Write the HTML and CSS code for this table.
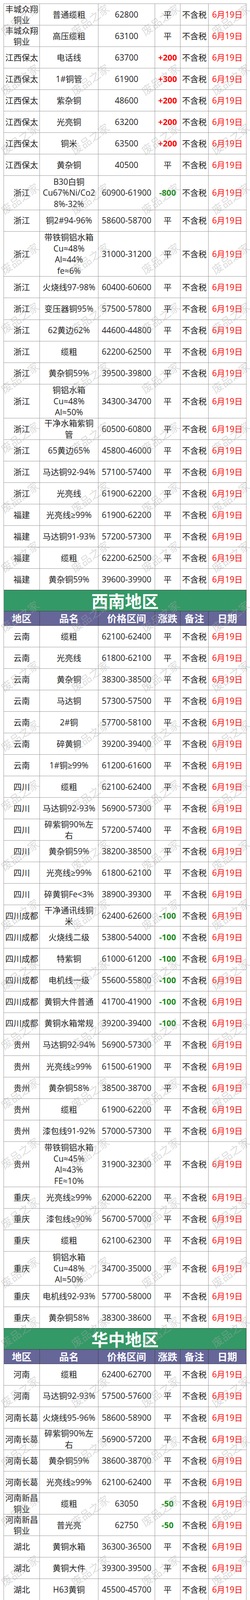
FILE: index.html
```html
<!DOCTYPE html>
<html lang="zh-CN">
<head>
<meta charset="utf-8">
<title>铜价行情</title>
<link rel="stylesheet" href="styles.css">
</head>
<body>
<div class="page">
<div class="tbl">
<div class="r"><div>丰城众翔<br>铜业</div><div>普通缆粗</div><div>62800</div><div>平</div><div>不含税</div><div class="dt">6月19日</div></div>
<div class="r"><div>丰城众翔<br>铜业</div><div>高压缆粗</div><div>63100</div><div>平</div><div>不含税</div><div class="dt">6月19日</div></div>
<div class="r"><div>江西保太</div><div>电话线</div><div>63700</div><div class="up">+200</div><div>不含税</div><div class="dt">6月19日</div></div>
<div class="r"><div>江西保太</div><div>1#铜管</div><div>61900</div><div class="up">+300</div><div>不含税</div><div class="dt">6月19日</div></div>
<div class="r"><div>江西保太</div><div>紫杂铜</div><div>48600</div><div class="up">+200</div><div>不含税</div><div class="dt">6月19日</div></div>
<div class="r"><div>江西保太</div><div>光亮铜</div><div>63200</div><div class="up">+200</div><div>不含税</div><div class="dt">6月19日</div></div>
<div class="r"><div>江西保太</div><div>铜米</div><div>63500</div><div class="up">+200</div><div>不含税</div><div class="dt">6月19日</div></div>
<div class="r"><div>江西保太</div><div>黄杂铜</div><div>40500</div><div>平</div><div>不含税</div><div class="dt">6月19日</div></div>
<div class="r l3"><div>浙江</div><div>B30白铜<br>Cu67%Ni/Co2<br>8%-32%</div><div>60900-61900</div><div class="dn">-800</div><div>不含税</div><div class="dt">6月19日</div></div>
<div class="r"><div>浙江</div><div>铜2#94-96%</div><div>58600-58700</div><div>平</div><div>不含税</div><div class="dt">6月19日</div></div>
<div class="r l4"><div>浙江</div><div>带铁铜铝水箱<br>Cu≈48%<br>Al≈44%<br>fe≈6%</div><div>31000-31200</div><div>平</div><div>不含税</div><div class="dt">6月19日</div></div>
<div class="r"><div>浙江</div><div>火烧线97-98%</div><div>60400-60600</div><div>平</div><div>不含税</div><div class="dt">6月19日</div></div>
<div class="r"><div>浙江</div><div>变压器铜95%</div><div>57500-57800</div><div>平</div><div>不含税</div><div class="dt">6月19日</div></div>
<div class="r"><div>浙江</div><div>62黄边62%</div><div>44600-44800</div><div>平</div><div>不含税</div><div class="dt">6月19日</div></div>
<div class="r"><div>浙江</div><div>缆粗</div><div>62200-62500</div><div>平</div><div>不含税</div><div class="dt">6月19日</div></div>
<div class="r"><div>浙江</div><div>黄杂铜59%</div><div>39500-39800</div><div>平</div><div>不含税</div><div class="dt">6月19日</div></div>
<div class="r l3"><div>浙江</div><div>铜铝水箱<br>Cu≈48%<br>Al≈50%</div><div>34300-34700</div><div>平</div><div>不含税</div><div class="dt">6月19日</div></div>
<div class="r"><div>浙江</div><div>干净水箱紫铜<br>管</div><div>60500-60800</div><div>平</div><div>不含税</div><div class="dt">6月19日</div></div>
<div class="r"><div>浙江</div><div>65黄边65%</div><div>45800-46000</div><div>平</div><div>不含税</div><div class="dt">6月19日</div></div>
<div class="r"><div>浙江</div><div>马达铜92-94%</div><div>57100-57400</div><div>平</div><div>不含税</div><div class="dt">6月19日</div></div>
<div class="r"><div>浙江</div><div>光亮线</div><div>61900-62200</div><div>平</div><div>不含税</div><div class="dt">6月19日</div></div>
<div class="r"><div>福建</div><div>光亮线≥99%</div><div>61900-62200</div><div>平</div><div>不含税</div><div class="dt">6月19日</div></div>
<div class="r"><div>福建</div><div>马达铜91-93%</div><div>57200-57300</div><div>平</div><div>不含税</div><div class="dt">6月19日</div></div>
<div class="r"><div>福建</div><div>缆粗</div><div>62200-62500</div><div>平</div><div>不含税</div><div class="dt">6月19日</div></div>
<div class="r"><div>福建</div><div>黄杂铜59%</div><div>39600-39900</div><div>平</div><div>不含税</div><div class="dt">6月19日</div></div>

<div class="sec">西南地区</div>
<div class="r hd"><div>地区</div><div>品名</div><div>价格区间</div><div>涨跌</div><div>备注</div><div>日期</div></div>
<div class="r"><div>云南</div><div>缆粗</div><div>62100-62400</div><div>平</div><div>不含税</div><div class="dt">6月19日</div></div>
<div class="r"><div>云南</div><div>光亮线</div><div>61800-62100</div><div>平</div><div>不含税</div><div class="dt">6月19日</div></div>
<div class="r"><div>云南</div><div>黄杂铜</div><div>38300-38500</div><div>平</div><div>不含税</div><div class="dt">6月19日</div></div>
<div class="r"><div>云南</div><div>马达铜</div><div>57300-57500</div><div>平</div><div>不含税</div><div class="dt">6月19日</div></div>
<div class="r"><div>云南</div><div>2#铜</div><div>57700-58100</div><div>平</div><div>不含税</div><div class="dt">6月19日</div></div>
<div class="r"><div>云南</div><div>碎黄铜</div><div>39200-39400</div><div>平</div><div>不含税</div><div class="dt">6月19日</div></div>
<div class="r"><div>云南</div><div>1#铜≥99%</div><div>61200-61600</div><div>平</div><div>不含税</div><div class="dt">6月19日</div></div>
<div class="r"><div>四川</div><div>缆粗</div><div>62100-62400</div><div>平</div><div>不含税</div><div class="dt">6月19日</div></div>
<div class="r"><div>四川</div><div>马达铜92-93%</div><div>56900-57300</div><div>平</div><div>不含税</div><div class="dt">6月19日</div></div>
<div class="r"><div>四川</div><div>碎紫铜90%左<br>右</div><div>57200-57400</div><div>平</div><div>不含税</div><div class="dt">6月19日</div></div>
<div class="r"><div>四川</div><div>黄杂铜59%</div><div>38200-38500</div><div>平</div><div>不含税</div><div class="dt">6月19日</div></div>
<div class="r"><div>四川</div><div>光亮线≥99%</div><div>61800-62100</div><div>平</div><div>不含税</div><div class="dt">6月19日</div></div>
<div class="r"><div>四川</div><div>碎黄铜Fe&lt;3%</div><div>38900-39300</div><div>平</div><div>不含税</div><div class="dt">6月19日</div></div>
<div class="r"><div>四川成都</div><div>干净通讯线铜<br>米</div><div>62400-62600</div><div class="dn">-100</div><div>不含税</div><div class="dt">6月19日</div></div>
<div class="r"><div>四川成都</div><div>火烧线二级</div><div>53800-54000</div><div class="dn">-100</div><div>不含税</div><div class="dt">6月19日</div></div>
<div class="r"><div>四川成都</div><div>特紫铜</div><div>61000-61200</div><div class="dn">-100</div><div>不含税</div><div class="dt">6月19日</div></div>
<div class="r"><div>四川成都</div><div>电机线一级</div><div>55600-55800</div><div class="dn">-100</div><div>不含税</div><div class="dt">6月19日</div></div>
<div class="r"><div>四川成都</div><div>黄铜大件普通</div><div>41700-41900</div><div class="dn">-100</div><div>不含税</div><div class="dt">6月19日</div></div>
<div class="r"><div>四川成都</div><div>黄铜水箱常规</div><div>39200-39400</div><div class="dn">-100</div><div>不含税</div><div class="dt">6月19日</div></div>
<div class="r"><div>贵州</div><div>马达铜92-94%</div><div>56900-57300</div><div>平</div><div>不含税</div><div class="dt">6月19日</div></div>
<div class="r"><div>贵州</div><div>光亮线≥99%</div><div>61500-61900</div><div>平</div><div>不含税</div><div class="dt">6月19日</div></div>
<div class="r"><div>贵州</div><div>黄杂铜58%</div><div>38500-38700</div><div>平</div><div>不含税</div><div class="dt">6月19日</div></div>
<div class="r"><div>贵州</div><div>缆粗</div><div>61900-62200</div><div>平</div><div>不含税</div><div class="dt">6月19日</div></div>
<div class="r"><div>贵州</div><div>漆包线91-92%</div><div>57000-57300</div><div>平</div><div>不含税</div><div class="dt">6月19日</div></div>
<div class="r l4"><div>贵州</div><div>带铁铜铝水箱<br>Cu≈45%<br>Al≈43%<br>FE≈10%</div><div>31900-32300</div><div>平</div><div>不含税</div><div class="dt">6月19日</div></div>
<div class="r"><div>重庆</div><div>光亮线≥99%</div><div>62000-62200</div><div>平</div><div>不含税</div><div class="dt">6月19日</div></div>
<div class="r"><div>重庆</div><div>漆包线≥90%</div><div>56700-57000</div><div>平</div><div>不含税</div><div class="dt">6月19日</div></div>
<div class="r"><div>重庆</div><div>缆粗</div><div>62100-62300</div><div>平</div><div>不含税</div><div class="dt">6月19日</div></div>
<div class="r l3"><div>重庆</div><div>铜铝水箱<br>Cu≈48%<br>Al≈50%</div><div>34700-35000</div><div>平</div><div>不含税</div><div class="dt">6月19日</div></div>
<div class="r"><div>重庆</div><div>电机线92-93%</div><div>57700-58000</div><div>平</div><div>不含税</div><div class="dt">6月19日</div></div>
<div class="r"><div>重庆</div><div>黄杂铜58%</div><div>38300-38600</div><div>平</div><div>不含税</div><div class="dt">6月19日</div></div>

<div class="sec">华中地区</div>
<div class="r hd"><div>地区</div><div>品名</div><div>价格区间</div><div>涨跌</div><div>备注</div><div>日期</div></div>
<div class="r"><div>河南</div><div>缆粗</div><div>62400-62700</div><div>平</div><div>不含税</div><div class="dt">6月19日</div></div>
<div class="r"><div>河南</div><div>马达铜92-93%</div><div>57500-57600</div><div>平</div><div>不含税</div><div class="dt">6月19日</div></div>
<div class="r"><div>河南长葛</div><div>火烧线95-96%</div><div>58600-58900</div><div>平</div><div>不含税</div><div class="dt">6月19日</div></div>
<div class="r"><div>河南长葛</div><div>碎紫铜90%左<br>右</div><div>56900-57200</div><div>平</div><div>不含税</div><div class="dt">6月19日</div></div>
<div class="r"><div>河南长葛</div><div>黄杂铜59%</div><div>38600-38700</div><div>平</div><div>不含税</div><div class="dt">6月19日</div></div>
<div class="r"><div>河南长葛</div><div>光亮线≥99%</div><div>62100-62400</div><div>平</div><div>不含税</div><div class="dt">6月19日</div></div>
<div class="r"><div>河南新昌<br>铜业</div><div>缆粗</div><div>63050</div><div class="dn">-50</div><div>不含税</div><div class="dt">6月19日</div></div>
<div class="r"><div>河南新昌<br>铜业</div><div>普光亮</div><div>62750</div><div class="dn">-50</div><div>不含税</div><div class="dt">6月19日</div></div>
<div class="r"><div>湖北</div><div>黄铜水箱</div><div>36300-36500</div><div>平</div><div>不含税</div><div class="dt">6月19日</div></div>
<div class="r"><div>湖北</div><div>黄铜大件</div><div>39300-39500</div><div>平</div><div>不含税</div><div class="dt">6月19日</div></div>
<div class="r"><div>湖北</div><div>H63黄铜</div><div>45500-45700</div><div>平</div><div>不含税</div><div class="dt">6月19日</div></div>
<div class="r"><div>湖北</div><div>碎黄铜</div><div>39100-39200</div><div>平</div><div>不含税</div><div class="dt">6月19日</div></div>
<div class="r"><div>湖北</div><div>马达铜85-87%</div><div>57000-57300</div><div>平</div><div>不含税</div><div class="dt">6月19日</div></div>
<div class="r"><div>湖北</div><div>花线</div><div>63100-63600</div><div>平</div><div>不含税</div><div class="dt">6月19日</div></div>
<div class="r"><div>湖北</div><div>光亮线</div><div>62100-62400</div><div>平</div><div>不含税</div><div class="dt">6月19日</div></div>
<div class="r"><div>湖北恒昌<br>电工</div><div>光亮铜</div><div>62800</div><div class="up">+200</div><div>不含税</div><div class="dt">6月19日</div></div>
<div class="r"><div>湖北恒昌<br>电工</div><div>缆粗</div><div>63100</div><div class="up">+200</div><div>不含税</div><div class="dt">6月19日</div></div>
<div class="r"><div>湖南</div><div>缆粗</div><div>62400-62700</div><div>平</div><div>不含税</div><div class="dt">6月19日</div></div>
<div class="r"><div>湖南</div><div>漆包线</div><div>57300-57600</div><div>平</div><div>不含税</div><div class="dt">6月19日</div></div>
<div class="r"><div>汨罗</div><div>马达铜91-93%</div><div>57000-57300</div><div>平</div><div>不含税</div><div class="dt">6月19日</div></div>
<div class="r"><div>汨罗</div><div>黄杂铜Fe&lt;3%</div><div>38500-38600</div><div>平</div><div>不含税</div><div class="dt">6月19日</div></div>
<div class="r"><div>汨罗</div><div>空调铜管</div><div>61300-61800</div><div>平</div><div>不含税</div><div class="dt">6月19日</div></div>
<div class="r"><div>汨罗</div><div>碎黄铜</div><div>39200-39500</div><div>平</div><div>不含税</div><div class="dt">6月19日</div></div>
<div class="r"><div>汨罗</div><div>紫铜屑</div><div>45000-45200</div><div>平</div><div>不含税</div><div class="dt">6月19日</div></div>
<div class="r"><div>汨罗</div><div>镀白紫铜板</div><div>61500-62000</div><div>平</div><div>不含税</div><div class="dt">6月19日</div></div>
<div class="r"><div>汨罗</div><div>汨罗光亮线≥<br>99%</div><div>62100-62400</div><div>平</div><div>不含税</div><div class="dt">6月19日</div></div>
<div class="r"><div>湖南金龙<br>铜业</div><div>光亮铜</div><div>62700</div><div>平</div><div>不含税</div><div class="dt">6月19日</div></div>
</div>

<div class="wm" aria-hidden="true">
<i>废品之家</i><i>废品之家</i><i>废品之家</i><i>废品之家</i>
<i>废品之家</i><i>废品之家</i><i>废品之家</i><i>废品之家</i>
<i>废品之家</i><i>废品之家</i><i>废品之家</i><i>废品之家</i>
<i>废品之家</i><i>废品之家</i><i>废品之家</i><i>废品之家</i>
<i>废品之家</i><i>废品之家</i><i>废品之家</i><i>废品之家</i>
<i>废品之家</i><i>废品之家</i><i>废品之家</i><i>废品之家</i>
<i>废品之家</i><i>废品之家</i><i>废品之家</i><i>废品之家</i>
<i>废品之家</i><i>废品之家</i><i>废品之家</i><i>废品之家</i>
<i>废品之家</i><i>废品之家</i><i>废品之家</i><i>废品之家</i>
<i>废品之家</i><i>废品之家</i><i>废品之家</i><i>废品之家</i>
<i>废品之家</i><i>废品之家</i><i>废品之家</i><i>废品之家</i>
<i>废品之家</i><i>废品之家</i><i>废品之家</i><i>废品之家</i>
<i>废品之家</i><i>废品之家</i><i>废品之家</i><i>废品之家</i>
<i>废品之家</i><i>废品之家</i><i>废品之家</i><i>废品之家</i>
<i>废品之家</i><i>废品之家</i><i>废品之家</i><i>废品之家</i>
<i>废品之家</i><i>废品之家</i><i>废品之家</i><i>废品之家</i>
<i>废品之家</i><i>废品之家</i><i>废品之家</i><i>废品之家</i>
<i>废品之家</i><i>废品之家</i><i>废品之家</i><i>废品之家</i>
<i>废品之家</i><i>废品之家</i><i>废品之家</i><i>废品之家</i>
<i>废品之家</i><i>废品之家</i><i>废品之家</i><i>废品之家</i>
<i>废品之家</i><i>废品之家</i><i>废品之家</i><i>废品之家</i>
<i>废品之家</i><i>废品之家</i><i>废品之家</i><i>废品之家</i>
<i>废品之家</i><i>废品之家</i><i>废品之家</i><i>废品之家</i>
<i>废品之家</i><i>废品之家</i><i>废品之家</i><i>废品之家</i>
<i>废品之家</i><i>废品之家</i><i>废品之家</i><i>废品之家</i>
<i>废品之家</i><i>废品之家</i><i>废品之家</i><i>废品之家</i>
<i>废品之家</i><i>废品之家</i><i>废品之家</i><i>废品之家</i>
<i>废品之家</i><i>废品之家</i><i>废品之家</i><i>废品之家</i>
<i>废品之家</i><i>废品之家</i><i>废品之家</i><i>废品之家</i>
<i>废品之家</i><i>废品之家</i><i>废品之家</i><i>废品之家</i>
<i>废品之家</i><i>废品之家</i><i>废品之家</i><i>废品之家</i>
<i>废品之家</i><i>废品之家</i><i>废品之家</i><i>废品之家</i>
<i>废品之家</i><i>废品之家</i><i>废品之家</i><i>废品之家</i>
</div>
</div>
</body>
</html>
```

FILE: styles.css
```css
* {
  box-sizing: border-box;
}

html, body {
  margin: 0;
  padding: 0;
  background: #ffffff;
}

.page {
  position: relative;
  overflow: hidden;
  width: 640px;
  padding: 9px 9px 8px 9px;
  font-family: "Open Sans", "Noto Sans CJK SC", sans-serif;
  font-size: 21px;
  color: #222222;
}

.tbl {
  width: 622px;
  border-top: 1px solid #9a9a9a;
  border-left: 1px solid #9a9a9a;
}

.r {
  display: flex;
  height: 55.05px;
  border-bottom: 1px solid #9a9a9a;
}

.r.l3 {
  height: 87.3px;
}

.r.l4 {
  height: 115.7px;
}

.r > div {
  flex: none;
  display: flex;
  align-items: center;
  justify-content: center;
  text-align: center;
  white-space: nowrap;
  line-height: 28.5px;
  border-right: 1px solid #9a9a9a;
}

.r > div:nth-child(1) { width: 92px; }
.r > div:nth-child(2) { width: 150px; }
.r > div:nth-child(3) { width: 145px; }
.r > div:nth-child(4) { width: 65px; }
.r > div:nth-child(5) { width: 72px; }
.r > div:nth-child(6) { width: 97px; }

.up {
  color: #ff0000;
  font-weight: 700;
}

.dn {
  color: #1a8a1a;
  font-weight: 700;
}

.dt {
  color: #ff0000;
}

.sec {
  height: 54.5px;
  margin-top: -1px;
  display: flex;
  align-items: center;
  justify-content: center;
  background: #339966;
  color: #ffffff;
  font-family: "Noto Sans CJK SC", sans-serif;
  font-size: 43px;
  font-weight: 700;
  line-height: 1;
  border-top: 1px solid #404040;
  border-right: 1px solid #404040;
  border-bottom: 1px solid #404040;
}

.r.hd {
  height: 37px;
  background: #666699;
  color: #ffffff;
  font-family: "Noto Sans CJK SC", sans-serif;
  font-size: 25px;
  font-weight: 700;
  border-bottom-color: #404040;
}

.r.hd > div {
  line-height: 1;
  border-right-color: #404040;
}

.wm {
  position: absolute;
  top: 0;
  left: 0;
  right: 0;
  bottom: 0;
  overflow: hidden;
  display: grid;
  align-content: start;
  padding-top: 35px;
  grid-template-columns: repeat(4, 100px);
  grid-auto-rows: 30px;
  column-gap: 80px;
  row-gap: 122.7px;
  pointer-events: none;
}

.wm i {
  font-style: normal;
  display: flex;
  align-items: center;
  justify-content: center;
  font-family: "Noto Sans CJK SC", sans-serif;
  font-size: 28px;
  font-weight: 400;
  line-height: 30px;
  color: rgba(170, 170, 170, 0.42);
  white-space: nowrap;
  transform: rotate(-36deg);
}
```
